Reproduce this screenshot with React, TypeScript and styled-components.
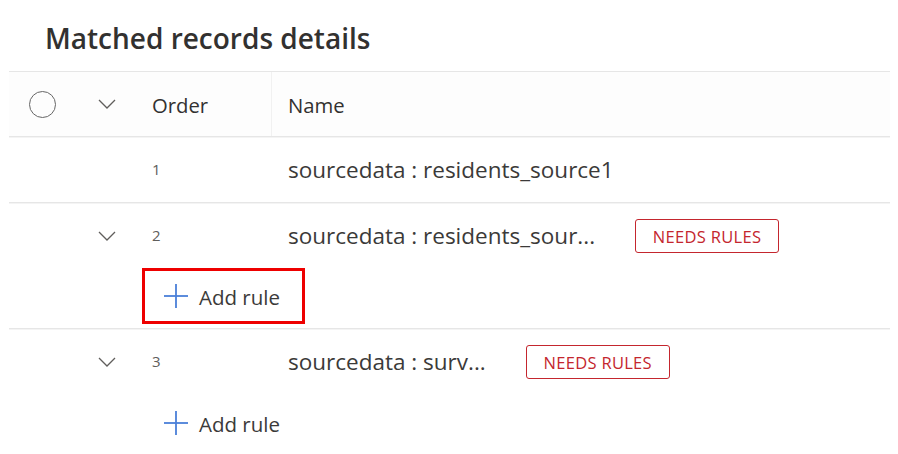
import React from "react";
import styled, { createGlobalStyle } from "styled-components";

const Global = createGlobalStyle`
  html, body { margin: 0; padding: 0; background: #ffffff; }
  body { font-family: "Open Sans", "Noto Sans", sans-serif; color: #323130; }
`;

const Page = styled.div`
  width: 898px;
  height: 454px;
  overflow: hidden;
  padding-left: 9px;
  box-sizing: border-box;
`;

const Panel = styled.div`
  width: 881px;
`;

const TitleBar = styled.div`
  height: 72px;
  display: flex;
  align-items: center;
  padding-left: 36px;
  box-sizing: border-box;
  border-bottom: 1px solid #e6e6e6;
  box-shadow: 0 1px 0 #f4f4f4;
`;

const Title = styled.h2`
  margin: 0;
  margin-top: 4px;
  font-size: 28px;
  font-weight: 600;
  color: #323130;
  letter-spacing: 0;
`;

const Grid = styled.div`
  display: grid;
  grid-template-columns: 68px 60px 135px 1fr;
`;

const HeaderRow = styled(Grid)`
  height: 65px;
  background: #fdfdfd;
  border-bottom: 1px solid #e6e6e6;
  box-shadow: 0 1px 0 #f4f4f4;
  box-sizing: border-box;
`;

const Cell = styled.div<{ $divider?: boolean }>`
  display: flex;
  align-items: center;
  ${(p) => (p.$divider ? "border-right: 1px solid #f1f1f1;" : "")}
`;

const CenterCell = styled(Cell)`
  justify-content: center;
`;

const HeaderText = styled.span<{ $pad: number }>`
  padding-left: ${(p) => p.$pad}px;
  font-size: 20.3px;
  font-weight: 500;
  color: #323130;
  margin-top: 2px;
`;

const Circle = styled.span`
  width: 25px;
  height: 25px;
  border: 1.6px solid #666;
  border-radius: 50%;
  margin-right: 1px;
`;

const Group = styled.div<{ $last?: boolean }>`
  border-bottom: 1px solid ${(p) => (p.$last ? "#cfcfcf" : "#e6e6e6")};
  box-shadow: 0 1px 0 ${(p) => (p.$last ? "#ececec" : "#f4f4f4")};
`;

const MainRow = styled(Grid)`
  height: 65px;
`;

const OrderNum = styled.span`
  padding-left: 15px;
  font-size: 15px;
  color: #605e5c;
  margin-top: -1px;
`;

const NameCell = styled(Cell)`
  padding-left: 16px;
  gap: 40px;
`;

const NameText = styled.span`
  font-size: 22.5px;
  color: #3b3a39;
  white-space: nowrap;
  margin-top: -1px;
`;

const Badge = styled.span`
  display: inline-flex;
  align-items: center;
  justify-content: center;
  height: 34px;
  width: 144px;
  box-sizing: border-box;
  border: 1.5px solid #c4262e;
  border-radius: 3px;
  color: #c4262e;
  font-size: 16.5px;
  letter-spacing: 0.3px;
  margin-top: 1px;
`;

const RuleRow = styled.div`
  height: 60px;
  padding-left: 133px;
  display: flex;
  align-items: flex-start;
`;

const AddRuleButton = styled.button<{ $highlight?: boolean }>`
  width: 163px;
  height: 56px;
  box-sizing: border-box;
  border: 3px solid ${(p) => (p.$highlight ? "#ee0000" : "transparent")};
  background: transparent;
  display: flex;
  align-items: center;
  gap: 10px;
  padding: 0 0 0 18px;
  margin-top: ${(p) => (p.$highlight ? "0" : "1px")};
  font-family: inherit;
  cursor: pointer;
`;

const AddRuleText = styled.span`
  font-size: 20.5px;
  color: #3b3a39;
  margin-top: 1px;
`;

const Chevron = () => (
  <svg width="18" height="10" viewBox="0 0 18 10" fill="none">
    <polyline points="1,1 9,9 17,1" stroke="#605e5c" strokeWidth="1.3" />
  </svg>
);

const Plus = () => (
  <svg width="26" height="26" viewBox="0 0 26 26" fill="none">
    <line x1="13" y1="1" x2="13" y2="25" stroke="#4a7fd8" strokeWidth="1.8" />
    <line x1="1" y1="13" x2="25" y2="13" stroke="#4a7fd8" strokeWidth="1.8" />
  </svg>
);

type Row = { order: number; name: string; needsRules: boolean; expandable: boolean; highlight?: boolean };

const rows: Row[] = [
  { order: 1, name: "sourcedata : residents_source1", needsRules: false, expandable: false },
  { order: 2, name: "sourcedata : residents_sour...", needsRules: true, expandable: true, highlight: true },
  { order: 3, name: "sourcedata : surv...", needsRules: true, expandable: true },
];

export default function App() {
  return (
    <>
      <Global />
      <Page>
        <Panel>
          <TitleBar>
            <Title>Matched records details</Title>
          </TitleBar>
          <HeaderRow>
            <CenterCell>
              <Circle />
            </CenterCell>
            <CenterCell>
              <Chevron />
            </CenterCell>
            <Cell $divider>
              <HeaderText $pad={15}>Order</HeaderText>
            </Cell>
            <Cell>
              <HeaderText $pad={16}>Name</HeaderText>
            </Cell>
          </HeaderRow>
          {rows.map((r, i) => (
            <Group key={r.order} $last={i === rows.length - 1}>
              <MainRow>
                <Cell />
                <CenterCell>{r.expandable && <Chevron />}</CenterCell>
                <Cell>
                  <OrderNum>{r.order}</OrderNum>
                </Cell>
                <NameCell>
                  <NameText>{r.name}</NameText>
                  {r.needsRules && <Badge>NEEDS RULES</Badge>}
                </NameCell>
              </MainRow>
              {r.expandable && (
                <RuleRow>
                  <AddRuleButton $highlight={r.highlight}>
                    <Plus />
                    <AddRuleText>Add rule</AddRuleText>
                  </AddRuleButton>
                </RuleRow>
              )}
            </Group>
          ))}
        </Panel>
      </Page>
    </>
  );
}
